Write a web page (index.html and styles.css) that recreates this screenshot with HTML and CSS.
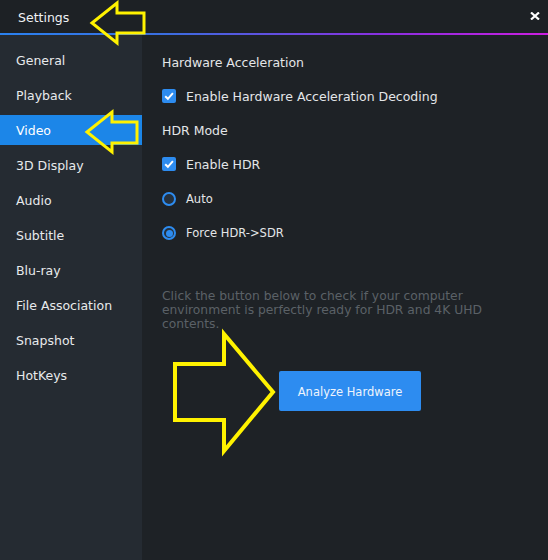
FILE: index.html
```html
<!DOCTYPE html>
<html>
<head>
<meta charset="utf-8">
<link rel="stylesheet" href="styles.css">
</head>
<body>
<div class="app">
  <header class="titlebar">
    <span class="title">Settings</span>
    <button class="close" aria-label="Close">
      <svg width="10" height="8" viewBox="0 0 10 8"><path d="M1 0.5 L9 7.5 M9 0.5 L1 7.5" stroke="#fff" stroke-width="2.2" fill="none"/></svg>
    </button>
  </header>
  <div class="main">
    <nav class="sidebar">
      <div class="nav-item">General</div>
      <div class="nav-item">Playback</div>
      <div class="nav-item active">Video</div>
      <div class="nav-item">3D Display</div>
      <div class="nav-item">Audio</div>
      <div class="nav-item">Subtitle</div>
      <div class="nav-item">Blu-ray</div>
      <div class="nav-item">File Association</div>
      <div class="nav-item">Snapshot</div>
      <div class="nav-item">HotKeys</div>
    </nav>
    <section class="content">
      <div class="row heading">Hardware Acceleration</div>
      <div class="row option">
        <span class="checkbox checked">
          <svg width="14" height="14" viewBox="0 0 14 14"><path d="M3.2 7.2 L5.9 9.8 L10.9 4.2" stroke="#fff" stroke-width="2" fill="none"/></svg>
        </span>
        <span>Enable Hardware Acceleration Decoding</span>
      </div>
      <div class="row heading">HDR Mode</div>
      <div class="row option">
        <span class="checkbox checked">
          <svg width="14" height="14" viewBox="0 0 14 14"><path d="M3.2 7.2 L5.9 9.8 L10.9 4.2" stroke="#fff" stroke-width="2" fill="none"/></svg>
        </span>
        <span>Enable HDR</span>
      </div>
      <div class="row option small">
        <span class="radio"></span>
        <span>Auto</span>
      </div>
      <div class="row option small">
        <span class="radio selected"></span>
        <span>Force HDR-&gt;SDR</span>
      </div>
      <p class="desc">Click the button below to check if your computer environment is perfectly ready for HDR and 4K UHD contents.</p>
      <button class="analyze">Analyze Hardware</button>
    </section>
  </div>
  <svg class="annotations" width="548" height="560" viewBox="0 0 548 560">
    <polygon points="92,23 117,3 117,13 144,13 144,33 117,33 117,43" fill="none" stroke="#fff200" stroke-width="3" stroke-linejoin="miter"/>
    <polygon points="87,132 112,112 112,122 137,122 137,143 112,143 112,152" fill="none" stroke="#fff200" stroke-width="3" stroke-linejoin="miter"/>
    <polygon points="273,392 224,334 224,364 175,364 175,420 224,420 224,451" fill="none" stroke="#fff200" stroke-width="4" stroke-linejoin="miter"/>
  </svg>
</div>
</body>
</html>
```

FILE: styles.css
```css
* { box-sizing: border-box; }
html, body {
  margin: 0;
  padding: 0;
  background: #1e2226;
}
body {
  font-family: "DejaVu Sans", Verdana, sans-serif;
  font-size: 12.5px;
  color: #e4e6e8;
}
.app {
  position: relative;
  width: 548px;
  height: 560px;
  display: flex;
  flex-direction: column;
  overflow: hidden;
}
.titlebar {
  height: 35px;
  flex: 0 0 35px;
  display: flex;
  align-items: center;
  justify-content: space-between;
  padding: 2px 4px 0 18px;
  background: #1d2125;
  border-bottom: 2px solid transparent;
  border-image: linear-gradient(90deg, #2a82f0 0%, #3a6ee0 30%, #8a2fe0 70%, #cc1ee0 100%) 1;
}
.title {
  font-size: 12.5px;
  color: #f0f2f4;
}
.close {
  background: none;
  border: 0;
  padding: 0 4px;
  display: flex;
  align-items: center;
  height: 20px;
  margin-top: -4px;
}
.main {
  flex: 1;
  display: flex;
}
.sidebar {
  width: 142px;
  background: #252b32;
  padding-top: 10px;
  display: flex;
  flex-direction: column;
  gap: 5px;
}
.nav-item {
  height: 30px;
  display: flex;
  align-items: center;
  padding-left: 16px;
  color: #e8eaec;
}
.nav-item.active {
  background: #1c86e8;
  color: #fff;
}
.content {
  flex: 1;
  padding: 10px 0 0 20px;
  background: #1e2226;
}
.row {
  height: 34px;
  display: flex;
  align-items: center;
}
.option {
  gap: 10px;
}
.option.small {
  font-size: 11.5px;
  padding-top: 2px;
}
.checkbox {
  width: 14px;
  height: 14px;
  border-radius: 2px;
  background: #2d8cf0;
  display: flex;
}
.radio {
  width: 14px;
  height: 14px;
  border-radius: 50%;
  border: 2px solid #2d8cf0;
  background: #26313d;
  display: flex;
  align-items: center;
  justify-content: center;
}
.radio.selected::after {
  content: "";
  width: 7px;
  height: 7px;
  border-radius: 50%;
  background: #2d8cf0;
}
.desc {
  margin: 40px 0 0 0;
  width: 345px;
  font-size: 12.3px;
  line-height: 14px;
  color: #5b6167;
}
.analyze {
  display: block;
  margin: 40px 0 0 117px;
  width: 142px;
  height: 40px;
  padding-top: 3px;
  border: 0;
  border-radius: 2px;
  background: #2d8cf0;
  color: #eef4fc;
  font-family: "DejaVu Sans", Verdana, sans-serif;
  font-size: 11.5px;
}
.annotations {
  position: absolute;
  left: 0;
  top: 0;
  pointer-events: none;
}
```
